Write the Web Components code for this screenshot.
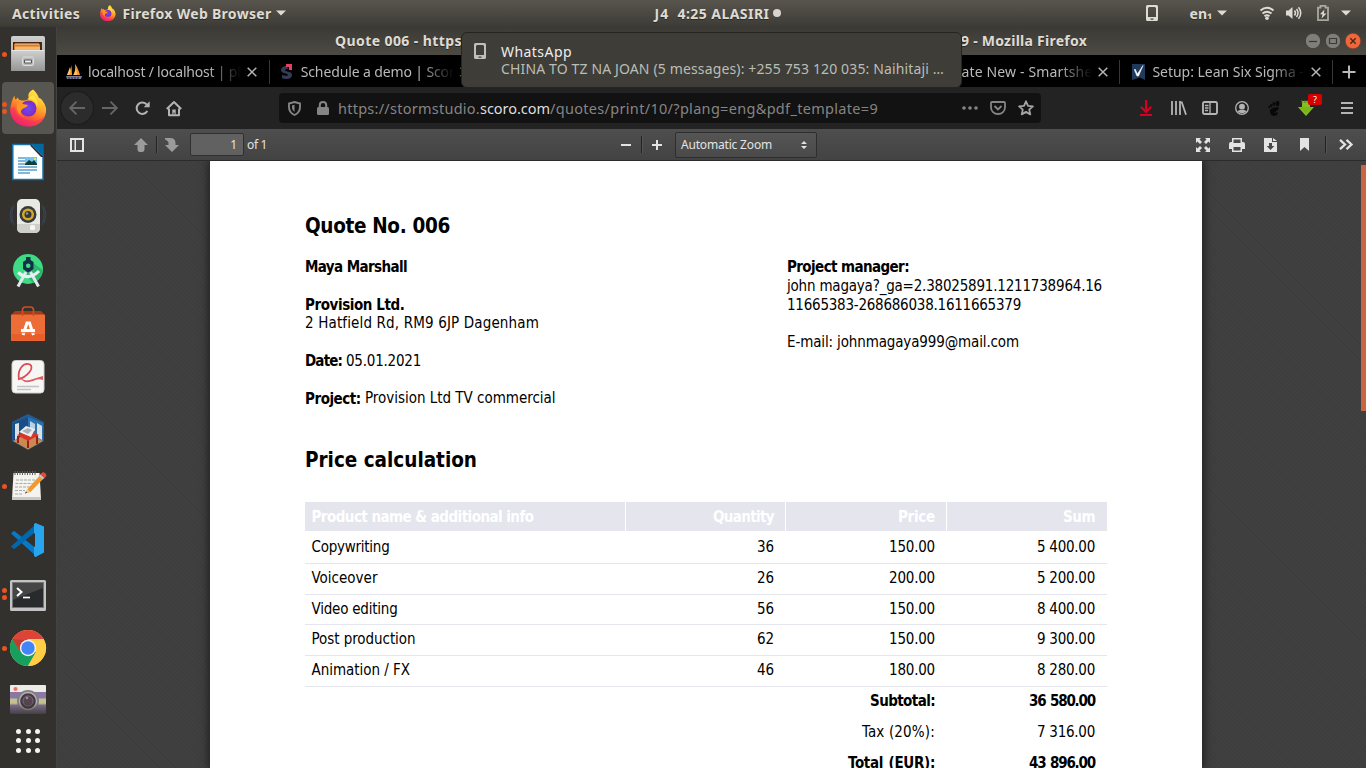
<!DOCTYPE html>
<html lang="en"><head><meta charset="utf-8"><title>Quote 006</title>
<style>html,body{margin:0;height:100%;overflow:hidden;background:#3d3d3d}</style></head><body>
<desktop-shell></desktop-shell>
<script>
const define=(name,html,init)=>customElements.define(name,class extends HTMLElement{
  constructor(){super();const t=document.createElement('template');t.innerHTML=html;this.attachShadow({mode:'open'}).append(t.content.cloneNode(true));}
  connectedCallback(){if(init)init.call(this);}
});

/* Icons share one dictionary; each entry is [width, height, markup]. */
const S='fill="none" stroke="currentColor"';
const ICONS={
caret:[10,10,'<path d="M0 2.5h10L5 7.5z" fill="currentColor"/>'],
phone:[12,16,'<path d="M1.5 0h9Q12 0 12 1.500v13q0 1.500-1.500 1.500h-9Q0 16 0 14.500v-13Q0 0 1.500 0zM2 3v9h8V3L9 2H3zM4.500 13.500v1.300h3v-1.300z" fill="currentColor" fill-rule="evenodd"/>'],
wifi:[16,14,`<g ${S} stroke-width="1.900"><path d="M1.500 4.500Q8-1 14.500 4.500"/><path d="M3.500 7.500q4.500-3.700 9 0"/><path d="M5.500 10.200q2.500-2 5 0"/></g><circle cx="8" cy="12.200" r="1.800" fill="currentColor"/>`],
volume:[16,14,`<path d="M0 4.500h2.500L6.500 1v12L2.500 9.500H0z" fill="currentColor"/><g ${S} stroke-width="1.500"><path d="M8.500 4.500q2 2.500 0 5"/><path d="M10.500 3q3 4 0 8"/><path d="M12.500 1.300q4.500 5.700 0 11.400"/></g>`],
battery:[12,16,`<path d="M3.500 2.700V.8h5v1.900H11v12.500H1V2.700z" ${S} stroke-width="1.800" opacity=".65"/><path d="M7.500 4.500 3 9.300h2.500L4.500 13.500 9.500 8.500H6.800z" fill="currentColor"/>`],
ff:[36,38,`<defs><linearGradient id="f" x1=".8" y1="0" x2=".3" y2="1"><stop stop-color="#fff44f"/><stop offset=".35" stop-color="#ffb52d"/><stop offset=".65" stop-color="#ff6a2b"/><stop offset="1" stop-color="#e5137c"/></linearGradient><radialGradient id="p"><stop stop-color="#6f4bf0"/><stop offset="1" stop-color="#7d2ac8"/></radialGradient></defs><path d="M23 .5C27 4 28 7 29 9c2 0 6 5 7 10C37 30 29 37.500 18 37.500S-.5 29 .4 19C1 14 3 8.500 4.500 6.500c0 2 .5 3 1 4L8 8.500c0 2 2 3 4 3 2 0 5 0 7-2C17 5 20 2 23 .5z" fill="url(#f)"/><path d="M0 20C0 31 8 37.500 18 37.500c8 0 15-4 17.500-12-3 5-9 7-15 6C10 31 5 26 5 18z" fill="#fb2865" opacity=".5"/><circle cx="18.500" cy="19.500" r="8" fill="url(#p)"/><path d="M7 15c2-2 4-2 6 0l5 1c-1 3-5 2-7 6-2 3 1 5 4 6-6-1-9-6-8-13z" fill="#ff9820"/><path d="M17 10c5-1 10 3 10 8 2-5-1-9-4-12z" fill="#ffe43f"/>`],
pma:[16,16,'<path d="M1 11C4 8 5 4 5.500 1L6 11zM7 11C10 7 9 4 9 0c3 4 4 8 5 11z" fill="#f79a26"/><path d="M4 3C5 6 4 9 3 11H1zM9.500 5q2 3 1.500 6H8z" fill="#ffc37a"/><path d="M0 12h16l-1 3H1z" fill="#767b98"/><path d="M3 15v-2m3 2v-2m3 2v-2m3 2v-2" stroke="#222" />'],
scoro:[12,15,'<path d="M6 2C2 2 0 4 0 6c0 4 7 3 7 5 0 1-3 1-6 0v3c4 2 10 1 10-3 0-4-7-3-7-5 0-1 2-1 3-1z" fill="#343b57"/><path d="M5 0h6v6H8V3H5z" fill="#e54064"/>'],
sheet:[13,16,'<path d="M0 0h13v16l-5-2.500L0 16z" fill="#203a5c"/><path d="M3 5l2.500 5L11 1.500 6.500 12H5L2.500 6z" fill="#fff" stroke="#fff" stroke-width=".6"/>'],
x:[10,10,`<path d="M.7.7l8.600 8.600M9.300.7.7 9.300" ${S} stroke-width="1.500"/>`],
plus:[14,14,`<path d="M7 .5v13M.5 7h13" ${S} stroke-width="2"/>`],
back:[16,14,`<path d="M16 7H1M7.500.7 1.200 7l6.300 6.300" ${S} stroke-width="1.900"/>`],
fwd:[16,14,`<path d="M0 7h15M8.500.7 14.800 7l-6.300 6.300" ${S} stroke-width="1.900"/>`],
reload:[15,14,`<path d="M11.800 3.600A5.700 5.700 0 1 0 12.300 10" ${S} stroke-width="2"/><path d="M14.700.3v6H8.700z" fill="currentColor"/>`],
home:[16,15,`<path d="M.8 8 8 1l7.200 7M3 7.500v6.700h10V7.500" ${S} stroke-width="2" stroke-linejoin="round"/><path d="M6.300 8.500h3.400v5h-1.200v-2h-1v2H6.300z" fill="currentColor"/>`],
shield:[13,15,`<path d="M6.500 1 12 2.500V6c0 4-2 6.500-5.500 8C3 12.500 1 10 1 6V2.500z" ${S} stroke-width="1.900"/><path d="M6.500 3.800V11C4.700 9.500 4 8 4 6V4.500z" fill="currentColor"/>`],
lock:[12,14,`<path d="M2.800 7V4q0-3 3.200-3t3.200 3v3" ${S} stroke-width="2"/><rect y="6" width="12" height="8" rx="1.500" fill="currentColor"/>`],
dots:[16,4,'<g fill="currentColor"><circle cx="2" cy="2" r="1.800"/><circle cx="8" cy="2" r="1.800"/><circle cx="14" cy="2" r="1.800"/></g>'],
pocket:[16,14,`<path d="M2 1h12q1 0 1 1v4.500c0 3.500-3 6.500-7 6.500S1 10 1 6.500V2q0-1 1-1z" ${S} stroke-width="1.800"/><path d="M4.500 5 8 8.500 11.500 5" ${S} stroke-width="1.900"/>`],
star:[16,16,`<path d="M8 1.300l2 4.500 4.900.5-3.700 3.300 1.100 4.800L8 11.900l-4.300 2.500 1.100-4.800L1.100 6.300 6 5.800z" ${S} stroke-width="1.800" stroke-linejoin="round"/>`],
down:[12,16,`<path d="M6 0v12M.8 6.800 6 12l5.200-5.200M0 15h12" ${S} stroke-width="2"/>`],
library:[16,14,`<path d="M1 0v14M5 0v14M9 0v14M10.500.5 15 13.700" ${S} stroke-width="1.800"/>`],
sidebar:[16,14,`<rect x="1" y="1" width="14" height="12" rx="1.500" ${S} stroke-width="1.900"/><path d="M8 1v12M3 4.500h3.500M3 7h3.500M3 9.500h3" ${S} stroke-width="1.300"/>`],
account:[14,14,`<circle cx="7" cy="7" r="6.300" ${S} stroke-width="1.300"/><circle cx="7" cy="5.700" r="2.900" fill="currentColor"/><path d="M2.600 10.500q1-1.700 2.500-1.500h4q1.500 0 2.400 1.500Q9.500 12.200 7 12.200t-4.400-1.700z" fill="currentColor"/>`],
foot:[12,15,'<g fill="#080808"><ellipse cx="9.500" cy="2.500" rx="2" ry="2.700"/><ellipse cx="5.800" cy="3" rx="1.300" ry="1.900"/><ellipse cx="3.300" cy="4.400" rx="1.100" ry="1.600"/><ellipse cx="1.300" cy="6" rx="1" ry="1.300"/><path d="M10.500 6.500C6 5.500 1.500 7.500 2 11c.5 3.500 4 4.500 6 3.500 2-1 2-3 1-3.500-1 0-1.500 1.500-2.500 1C5.500 11 11.500 9.500 10.500 6.500z"/></g>'],
green:[16,16,'<path d="M4 1v6H0l8 9 8-9h-4V1z" fill="#85be20"/><path d="M4 0v3M7 0v3M10 0v3" stroke="#4d7717"/><path d="M2 7h12l-6 7z" fill="#79b51b"/>'],
menu:[12,14,`<path d="M0 2h12M0 7h12M0 12h12" ${S} stroke-width="2"/>`],
pside:[14,14,'<path d="M0 0h14v14H0zM2 2v10h2.500V2zM6 2v10h6V2z" fill="#e4e4e4" fill-rule="evenodd"/>'],
up:[14,14,'<path d="M7 0l7 7h-3.500v4Q10.500 14 8 14H6q-2.500 0-2.500-3V7H0z" fill="currentColor"/>'],
dn:[14,14,'<path d="M0 0h5q5.500 0 5.500 5v2H14l-7 7-7-7h3.500V5Q3.500 3 0 1.500z" fill="currentColor"/>'],
minus:[10,2,'<path d="M0 0h10v2H0z" fill="currentColor"/>'],
pplus:[10,10,'<path d="M4 0h2v4h4v2H6v4H4V6H0V4h4z" fill="currentColor"/>'],
updown:[6,8,'<path d="M3 0l3 3H0zM3 8l3-3H0z" fill="currentColor"/>'],
full:[14,14,`<path d="M0 0h5L3.500 1.500 6 4 4 6 1.500 3.500 0 5zM14 0v5l-1.500-1.500L10 6 8 4l2.500-2.500L9 0zM0 14V9l1.500 1.500L4 8l2 2-2.500 2.500L5 14zM14 14H9l1.500-1.500L8 10l2-2 2.500 2.500L14 9z" fill="currentColor"/>`],
print:[16,14,'<path d="M3 0h10v4h1q2 0 2 2v5h-3v3H3v-3H0V6q0-2 2-2h1zM4.500 1.500V5h7V1.500zM4.500 9v3.500h7V9z" fill="currentColor" fill-rule="evenodd"/>'],
pdown:[13,14,'<path d="M0 0h8v4h5v10H0zM5 5v3H2.700l3.800 4 3.800-4H8V5z" fill="currentColor" fill-rule="evenodd"/><path d="M9 0l4 3H9z" fill="currentColor"/>'],
mark:[9,13,'<path d="M0 0h9v13L4.500 9 0 13z" fill="currentColor"/>'],
more:[14,11,`<path d="M1 .8l5 4.700-5 4.700M7.500.8l5 4.700-5 4.700" ${S} stroke-width="2.300"/>`],
wmin:[16,16,'<circle cx="8" cy="8" r="7.700" fill="#817e77" stroke="#34322e" stroke-width=".7"/><path d="M4 8.500h8" stroke="#3b3936" stroke-width="1.200"/>'],
wmax:[16,16,'<circle cx="8" cy="8" r="7.700" fill="#817e77" stroke="#34322e" stroke-width=".7"/><path d="M4.500 5.500h7v5h-7z" fill="none" stroke="#3b3936" stroke-width="1.200"/>'],
wclose:[16,16,'<circle cx="8" cy="8" r="7.700" fill="#ee683c" stroke="#7f341e" stroke-width=".5"/><path d="M5.300 5.300l5.400 5.400m0-5.400-5.400 5.400" stroke="#4d2416" stroke-width="1.400"/>'],
/* launcher artwork */
files:[36,36,'<defs><linearGradient id="g" x2="0" y2="1"><stop stop-color="#cfcfcf"/><stop offset="1" stop-color="#969696"/></linearGradient></defs><path d="M3 0h30q2 0 2 2v33H1V2q0-2 2-2z" fill="url(#g)"/><path d="M3 6h29v9H3z" fill="#4a2610"/><path d="M4 8h26v7H4z" fill="#d9792b"/><path d="M5 10.500h25v4H5z" fill="#f3b66b"/><path d="M5 8h24" stroke="#f7d4a4"/><path d="M1.500 14.500h33V35h-33z" fill="url(#g)"/><path d="M1.500 14.500h33" stroke="#e6e6e6"/><rect x="12.500" y="21" width="11" height="8.500" rx="1.500" fill="#b9b9b9" stroke="#ddd"/><path d="M14.500 24h7v3h-7z" fill="#eee" stroke="#555"/>'],
writer:[36,38,'<path d="M2.800 1.500h20L33 11.500v25H2.800z" fill="#fff" stroke="#1772a8" stroke-width="1.500"/><path d="M20.500.7h13.200V14z" fill="#0369a3"/><path d="M20.500.7 33.700 14H31L20.500 3z" fill="#1f3443"/><path d="M8 15h7m-7 3h7m-7 3h7m-7 3h19M8 27h19M8 30h12" stroke="#5aa0cd" stroke-width="1.600"/><path d="M15 14h12v8H15z" fill="#72c4ea"/><path d="M15 21l4-4 3 2 2-2 3 4v1H15z" fill="#143d36"/><circle cx="25" cy="16" r="1" fill="#ffe85c"/>'],
speaker:[36,36,'<g fill="none" stroke="#394350"><path d="M4 7q-4 10 0 20M2 9q-3.500 8 0 16M32 7q4 10 0 20M34 9q3.500 8 0 16" stroke-width="1.200"/></g><rect x="7" y="1" width="23" height="34" rx="5" fill="#e8e8e5"/><path d="M7 26v4q0 5 5 5h13q5 0 5-5v-4z" fill="#cfcfca"/><circle cx="18" cy="16.500" r="8.500" fill="#353a40"/><circle cx="18" cy="16.500" r="6" fill="#d3a928"/><circle cx="18" cy="16.500" r="3.500" fill="#33363a"/><circle cx="17" cy="15.500" r="1.200" fill="#92999f"/><rect x="20" y="27" width="5" height="5" rx="1.500" fill="#f6f6f6"/>'],
studio:[36,36,'<circle cx="18" cy="17" r="15" fill="#3ddc84"/><path d="M22 10l10.500 8A15 15 0 0 1 23 31L14 21z" fill="#2eb46b"/><path d="M16 20 8 34.500M20.500 20l8 14.500" stroke="#dfe8ee" stroke-width="3"/><path d="M8 20.500q10.500 9 21-1.500" fill="none" stroke="#e8eff5" stroke-width="3"/><path d="M16 5h4.500v3l3 2v7l-5.300 3.500L13 17v-7l3-2z" fill="#123046"/><circle cx="18.200" cy="13.700" r="2.300" fill="#3ddc84"/>'],
bag:[36,36,'<path d="M1 9l4-4h26l4 4z" fill="#a33c18"/><rect x="1" y="8.500" width="34" height="26.500" rx="1" fill="#ec6d37"/><path d="M1.500 28h33v6.500h-33z" fill="#e75e2b"/><path d="M12.500 10V4q0-3 3-3h5q3 0 3 3v6" fill="none" stroke="#cf4f21" stroke-width="1.700"/><path d="M13 29l4-12h2.500l4 12" fill="none" stroke="#fff" stroke-width="3"/><path d="M11 24.500h14" stroke="#fff" stroke-width="3"/><path d="M11 26.700h14" stroke="#eb7142" stroke-width="1"/>'],
pdf:[36,36,'<rect x="2" y=".5" width="32" height="32.500" rx="3.500" fill="#f6f6f5" stroke="#cfcfcf"/><path d="M8 19.500C17 17 25 8 20 4.500 13 2 7 10 9 20" fill="none" stroke="#dc4a50" stroke-width="1.700"/><path d="M9 15q3 7 11 5 6-2 13-4v4q-5-2-10 1Q12 25 9 15z" fill="#e05a5e"/><path d="M7 26.500h22M7 29.500h14" stroke="#c3c3c3" stroke-width="1.300"/>'],
house:[36,36,'<path d="M18 0l16 8v19L18 36 2 27V8z" fill="#1f5c97"/><path d="M18 3v18L3 27V9z" fill="#1a4d86"/><path d="M18 3v18l15 6V9z" fill="#2d72b0"/><path d="M18 19l15 8-15 8.500L3 27z" fill="#c88a50"/><path d="M5 10l4-1v14l-4 3zM27 9l5 3v14l-5-3z" fill="#d8e2e4"/><path d="M20 7l5 3v7l-5-2z" fill="#b8d2e3"/><path d="M8 22v7m19-7v8M18 26v8" stroke="#9c1d1b" stroke-width="2"/><path d="M7 21l12-5 10 5-11 6z" fill="#db352b"/><path d="M9 18l7-6 9 3-4 8z" fill="#ececec"/><path d="M12 17l6-3 4 2-4 4z" fill="#a9b4ba"/>'],
notes:[36,36,'<path d="M3.500 5h26L31 31H2z" fill="#f3f3f0"/><path d="M2 29h29v3H2z" fill="#c9c9c4"/><path d="M5 3v4m2.500-4v4M10 3v4m2.500-4v4M15 3v4m2.500-4v4M20 3v4m2.500-4v4M25 3v4" stroke="#5e5e5a"/><path d="M6 12h19M5.500 15.500h17M5 19h15M5 22.500h10M5 26h8" stroke="#aaa" stroke-width="1.200" stroke-dasharray="3 1"/><path d="M15 25.500l3-5L32 5l3.500 3.500L20.500 24z" fill="#f29a2e"/><path d="M30 7l4 3.500 2.500-2.500q0-3-3.500-4z" fill="#e2483e"/><path d="M29 8l3.700 3.500 1.500-1.500L30.500 6.500z" fill="#bcc5ca"/><path d="M15 25.500l2.500-4.500 2.500 2.800z" fill="#e9cfa3"/><path d="M15 25.500l1-2 1 1z" fill="#222"/>'],
code:[36,36,'<path d="M1 11.500l3-2.800L27 27v8z" fill="#0879c5"/><path d="M1 24.500l3 2.800L27 9V1z" fill="#0068af"/><path d="M25.500 1 34 4.500v26L25.500 35l-1.500-1V2z" fill="#29a5ee"/><path d="M25 11v14l-9-7z" fill="#33312d"/>'],
term:[36,36,'<rect x="0" y="4" width="36" height="31" rx="1.500" fill="#c3c3c5"/><rect x="2.500" y="6.500" width="31" height="25" fill="#292a2b" stroke="#777"/><path d="M3 7h30v5L3 24z" fill="#454545"/><path d="M7 12l4.500 4L7 20" fill="none" stroke="#fff" stroke-width="2"/><path d="M13 21.500h7" stroke="#fff" stroke-width="1.700"/>'],
chrome:[36,36,'<circle cx="18" cy="18" r="18" fill="#ffce44"/><path d="M18 18 2.400 9A18 18 0 0 0 18 36l8-14z" fill="#17a05d"/><path d="M2.400 9A18 18 0 0 1 33.600 9H18l-8 13z" fill="#db4437"/><path d="M2.400 9 11 22l7-4-4-8z" fill="#c33b30"/><path d="M18 9h15.600A18 18 0 0 1 18 36l8-14z" fill="#ffce44"/><circle cx="18" cy="18" r="8.200" fill="#f1f1f1"/><circle cx="18" cy="18" r="6.700" fill="#4285f4"/>'],
camera:[36,36,'<defs><linearGradient id="c" x2="0" y2="1"><stop offset=".6" stop-color="#33302c" stop-opacity="0"/><stop offset="1" stop-color="#33302c" stop-opacity=".8"/></linearGradient></defs><rect y="1" width="36" height="29" rx="1.500" fill="#8a78a2"/><path d="M0 2q0-1 1-1h34q1 0 1 1v6H0z" fill="#ecebe5"/><path d="M0 14.500h36v6H0z" fill="#c4c191"/><circle cx="18" cy="17" r="11" fill="#837f86"/><circle cx="18" cy="17" r="8.500" fill="#443c45" stroke="#bbb5b7" stroke-width="1.300"/><circle cx="18" cy="17" r="5" fill="#564451" stroke="#7c697a"/><circle cx="17" cy="14" r="1.300" fill="#9c8b9d"/><circle cx="5.500" cy="5" r="2" fill="#f36d68"/><path d="M0 1h36v29H0z" fill="url(#c)"/>']
};
customElements.define('ui-icon',class extends HTMLElement{
  constructor(){super();this.attachShadow({mode:'open'});}
  connectedCallback(){
    const [w,h,m]=ICONS[this.getAttribute('name')],k=+this.getAttribute('scale')||1;
    this.shadowRoot.innerHTML=`<style>:host{display:block;flex:none;width:${w*k}px;height:${h*k}px}svg{display:block;overflow:visible}</style><svg width="${w*k}" height="${h*k}" viewBox="0 0 ${w} ${h}">${m}</svg>`;
  }
});
/* Text tracked so that it fills the width given in w. */
define('fit-text','<style>:host{display:inline-block;flex:none;white-space:pre}span{display:inline-block}</style><span><slot></slot></span>',function(){
  const s=this.shadowRoot.querySelector('span'),w=+this.getAttribute('w');
  if(w){const n=this.textContent.length;s.style.letterSpacing=((w-s.getBoundingClientRect().width)/n)+'px';this.style.width=w+'px';}
});

define('top-bar',`<style>:host{display:flex;align-items:center;height:27px;box-sizing:border-box;background:linear-gradient(#58554d,#3d3c37);color:#dfdbd2;font:bold 14px/27px "Noto Sans",sans-serif;text-shadow:0 1px #2a2926;border-bottom:1px solid #3b3a36}.sub{display:inline-block;transform:translateY(-2.500px)}</style>
<fit-text w="68" style="margin-left:12px">Activities</fit-text><ui-icon name="ff" scale=".43" style="margin-left:20px"></ui-icon><fit-text w="149" style="margin-left:7px">Firefox Web Browser</fit-text><ui-icon name="caret" style="margin-left:5px"></ui-icon>
<fit-text w="15" style="margin-left:368px">J4</fit-text><fit-text w="92" style="margin-left:8px">4:25 ALASIRI</fit-text><span style="width:8px;height:8px;border-radius:4px;background:#d7d4cd;margin-left:4px"></span>
<ui-icon name="phone" style="margin-left:365px"></ui-icon><fit-text w="23" style="margin-left:31px">en<span class="sub">₁</span></fit-text><ui-icon name="caret" style="margin-left:5px"></ui-icon><ui-icon name="wifi" style="margin-left:32px"></ui-icon><ui-icon name="volume" style="margin-left:11px"></ui-icon><ui-icon name="battery" style="margin-left:15px"></ui-icon><ui-icon name="caret" style="margin-left:12px"></ui-icon>`);

define('dock-item',`<style>:host{display:flex;align-items:center;width:52px;height:52px;margin:1px 3px 1px 2px;border-radius:4px}:host([active]){background:#585651}
.d{width:8px;display:grid;gap:2px}.d i{width:5px;height:5px;border-radius:50%;background:#e95420}</style><div class="d"></div><slot></slot>`,function(){
  this.shadowRoot.querySelector('.d').innerHTML='<i></i>'.repeat(+this.getAttribute('dots')||0);});
define('app-dock',`<style>:host{display:flex;flex-direction:column;width:57px;height:741px;box-sizing:border-box;background:#33312d;border-right:1px solid #45433f}
.g{display:grid;grid-template-columns:repeat(3,5px);gap:4.500px;margin:-.5px 0 0 16px}.g i{width:5px;height:5px;border-radius:50%;background:#f4f4f2}</style>
<dock-item dots="1"><ui-icon name="files"></ui-icon></dock-item><dock-item dots="2" active><ui-icon name="ff"></ui-icon></dock-item><dock-item><ui-icon name="writer"></ui-icon></dock-item><dock-item><ui-icon name="speaker"></ui-icon></dock-item><dock-item><ui-icon name="studio"></ui-icon></dock-item><dock-item><ui-icon name="bag"></ui-icon></dock-item><dock-item><ui-icon name="pdf"></ui-icon></dock-item><dock-item><ui-icon name="house"></ui-icon></dock-item><dock-item dots="1"><ui-icon name="notes"></ui-icon></dock-item><dock-item><ui-icon name="code"></ui-icon></dock-item><dock-item dots="2"><ui-icon name="term"></ui-icon></dock-item><dock-item dots="1"><ui-icon name="chrome"></ui-icon></dock-item><dock-item><ui-icon name="camera"></ui-icon></dock-item>
<div class="g"><i></i><i></i><i></i><i></i><i></i><i></i><i></i><i></i><i></i></div>`);

define('title-bar',`<style>:host{display:flex;align-items:center;height:28px;background:linear-gradient(#3b3a36,#4d4a44);color:#dfdbd2;font:bold 14px/28px "Noto Sans",sans-serif;text-shadow:0 1px #2a2926}</style>
<fit-text w="127" style="margin-left:278px">Quote 006 - https</fit-text><fit-text w="126" style="margin-left:499px">9 - Mozilla Firefox</fit-text>
<ui-icon name="wmin" style="margin-left:218px"></ui-icon><ui-icon name="wmax" style="margin-left:4px"></ui-icon><ui-icon name="wclose" style="margin-left:4px"></ui-icon>`);

define('browser-tab',`<style>:host{display:flex;align-items:center;width:212.700px;flex:none;box-sizing:border-box;height:24px;border-right:1px solid #363636;padding-left:9px}
.i{width:22px;display:flex}.t{width:154px;height:24px;line-height:23px;overflow:hidden;-webkit-mask-image:linear-gradient(90deg,#000 120px,transparent 153px)}ui-icon{color:#b5b5b5;margin-left:5px}</style><div class="i"><slot name="icon"></slot></div><div class="t"><slot></slot></div><ui-icon name="x"></ui-icon>`);
define('tab-strip',`<style>:host{display:flex;align-items:center;height:32px;padding-top:1px;box-sizing:border-box;background:#000;color:#b9b9b9;font:14px "Noto Sans",sans-serif}</style>
<browser-tab><ui-icon slot="icon" name="pma"></ui-icon><fit-text w="166">localhost / localhost | php</fit-text></browser-tab>
<browser-tab><ui-icon slot="icon" name="scoro" style="margin-left:2px"></ui-icon><fit-text w="162">Schedule a demo | Scoro</fit-text></browser-tab>
<browser-tab></browser-tab><browser-tab></browser-tab><browser-tab><fit-text w="167">Create New - Smartsheet</fit-text></browser-tab>
<browser-tab style="padding-left:10px"><ui-icon slot="icon" name="sheet" style="margin-left:2px"></ui-icon><fit-text w="155">Setup: Lean Six Sigma - </fit-text></browser-tab>
<ui-icon name="plus" style="margin-left:9px"></ui-icon>`);

define('nav-bar',`<style>:host{display:flex;align-items:center;height:42px;background:#232323;color:#b4b4b4;font:14.500px/30px "Noto Sans",sans-serif}
.b{width:32px;height:32px;border-radius:50%;background:#2c2c2c;box-shadow:0 0 0 1px #1b1b1b;display:grid;place-items:center;margin-left:4px;color:#656565}
.u{display:flex;align-items:center;width:762px;height:30px;border-radius:4px;background:#121212;margin-left:97px;color:#858585}b{font-weight:400;color:#dedede}
.g{position:relative}.badge{position:absolute;left:10px;top:-6px;width:14px;height:11px;border-radius:2px;background:#d90000;color:#fff;font:9px/11px "Noto Sans",sans-serif;text-align:center}</style>
<div class="b"><ui-icon name="back"></ui-icon></div><ui-icon name="fwd" style="margin-left:9px;color:#656565"></ui-icon><ui-icon name="reload" style="margin-left:17px"></ui-icon><ui-icon name="home" style="margin-left:16px"></ui-icon>
<div class="u"><ui-icon name="shield" style="margin-left:9px"></ui-icon><ui-icon name="lock" style="margin-left:16px"></ui-icon><fit-text w="142" style="margin-left:9px">https://stormstudio.</fit-text><b><fit-text w="70">scoro.com</fit-text></b><fit-text w="328">/quotes/print/10/?plang=eng&amp;pdf_template=9</fit-text><ui-icon name="dots" style="margin-left:84px"></ui-icon><ui-icon name="pocket" style="margin-left:12px"></ui-icon><ui-icon name="star" style="margin-left:12px;color:#a5a5a5"></ui-icon></div>
<ui-icon name="down" style="margin-left:99px;color:#d70022"></ui-icon><ui-icon name="library" style="margin-left:19px"></ui-icon><ui-icon name="sidebar" style="margin-left:15px"></ui-icon><ui-icon name="account" style="margin-left:17px"></ui-icon><ui-icon name="foot" style="margin-left:19px"></ui-icon><div class="g" style="margin-left:18px"><ui-icon name="green"></ui-icon><div class="badge">?</div></div><ui-icon name="menu" style="margin-left:27px"></ui-icon>`);

define('pdf-toolbar',`<style>:host{display:flex;align-items:center;height:32px;box-sizing:border-box;background:linear-gradient(#4e4e4e,#434343);border-bottom:1px solid #2b2b2b;color:#e3e3e3;font:12px "Noto Sans",sans-serif}
.s{width:1px;height:17px;background:#222;box-shadow:1px 0 #555}.p{width:54px;height:23px;box-sizing:border-box;border:1px solid #303030;border-radius:2px;background:#616161;text-align:right;padding-right:6px;line-height:21px;margin-left:11px}
.z{display:flex;align-items:center;width:142px;height:26px;box-sizing:border-box;border:1px solid #2e2e2e;border-radius:2px;background:linear-gradient(#555,#494949);margin-left:13px}</style>
<ui-icon name="pside" style="margin-left:13px"></ui-icon><ui-icon name="up" style="margin-left:50px;color:#9b9b9b"></ui-icon><div class="s" style="margin-left:8px"></div><ui-icon name="dn" style="margin-left:8px;color:#9b9b9b"></ui-icon><div class="p">1</div><fit-text w="20" style="margin-left:3px">of 1</fit-text>
<ui-icon name="minus" style="margin-left:354px"></ui-icon><div class="s" style="margin-left:10px"></div><ui-icon name="pplus" style="margin-left:10px"></ui-icon><div class="z"><fit-text w="91" style="margin-left:5px">Automatic Zoom</fit-text><ui-icon name="updown" style="margin-left:29px"></ui-icon></div>
<ui-icon name="full" style="margin-left:379px"></ui-icon><ui-icon name="print" style="margin-left:19px"></ui-icon><ui-icon name="pdown" style="margin-left:19px"></ui-icon><ui-icon name="mark" style="margin-left:23px"></ui-icon><div class="s" style="margin-left:16px"></div><ui-icon name="more" style="margin-left:13px"></ui-icon>`);

const num=(w,t)=>`<fit-text w="${w}">${t}</fit-text>`;
const rows=[['Copywriting',78,36,'150.00','5 400.00'],['Voiceover',66,26,'200.00','5 200.00'],['Video editing',86,56,'150.00','8 400.00'],['Post production',104,62,'150.00','9 300.00'],['Animation / FX',98.5,46,'180.00','8 280.00']];
define('price-table',`<style>:host{display:block;width:802px}.r{display:grid;grid-template-columns:321px 160px 161px 160px;height:30.800px;line-height:28.400px;box-sizing:border-box;border-bottom:1.400px solid #e5e5ee}
.r>*{text-align:right;padding-right:12px}.r>:first-child{text-align:left;padding:0 0 0 6.500px}.h{height:30px;line-height:30px;border:0;color:#fff;font-weight:700}.h>*{background:#e5e5ee;border-right:1px solid #fff;padding-right:11px;height:29.500px}.h>:last-child{border:0;padding-right:12px}.n{border-color:transparent}.k{font-weight:700;word-spacing:1px}</style>
<div class="r h"><div>${num(222,'Product name &amp; additional info')}</div><div>${num(61,'Quantity')}</div><div>${num(37,'Price')}</div><div>${num(32,'Sum')}</div></div>
<div style="height:1px"></div>${rows.map(r=>`<div class="r"><div>${num(r[1],r[0])}</div><div>${num(17,r[2])}</div><div>${num(46,r[3])}</div><div>${num(58,r[4])}</div></div>`).join('')}
<div class="r n k"><div></div><div></div><div>${num(65,'Subtotal:')}</div><div>${num(66,'36 580.00')}</div></div>
<div class="r n"><div></div><div></div><div>${num(73,'Tax (20%):')}</div><div>${num(58,'7 316.00')}</div></div>
<div class="r n k"><div></div><div></div><div>${num(87,'Total (EUR):')}</div><div>${num(66,'43 896.00')}</div></div>`);

define('quote-page',`<style>:host{display:block;width:992px;height:607px;box-sizing:border-box;overflow:hidden;padding:52px 95px 0;background:#fff;color:#000;font:15px/18.750px "DejaVu Sans Condensed","DejaVu Sans",sans-serif;font-stretch:condensed}
h1,h2{font-size:20.500px;line-height:26px;margin:0}.c{display:grid;grid-template-columns:482px 1fr;margin-top:19.300px;height:149.700px}.c div{height:18.750px}.up{transform:translateY(-1px)}h2{margin-top:39px}price-table{margin-top:29px}</style>
<h1><fit-text w="145">Quote No. 006</fit-text></h1>
<section class="c"><div><div><b><fit-text w="102">Maya Marshall</fit-text></b></div><div></div><div><b><fit-text w="99.500">Provision Ltd.</fit-text></b></div><div class="up"><fit-text w="234">2 Hatfield Rd, RM9 6JP Dagenham</fit-text></div><div></div><div><b><fit-text w="41">Date: </fit-text></b><fit-text w="75">05.01.2021</fit-text></div><div></div><div><b><fit-text w="60">Project: </fit-text></b><fit-text class="up" w="190.500">Provision Ltd TV commercial</fit-text></div></div>
<div><div><b><fit-text w="122">Project manager:</fit-text></b></div><div><fit-text w="315">john magaya?_ga=2.38025891.1211738964.16</fit-text></div><div><fit-text w="234">11665383-268686038.1611665379</fit-text></div><div></div><div><fit-text w="232">E-mail: johnmagaya999@mail.com</fit-text></div></div></section>
<h2><fit-text w="172">Price calculation</fit-text></h2><price-table></price-table>`);

define('pdf-viewer',`<style>:host{display:flex;justify-content:space-between;height:607px;padding-left:153px;overflow:hidden;background:repeating-linear-gradient(45deg,#3d3d3d 0 1px,#404040 1px 3px)}quote-page{box-shadow:0 0 9px 1px #1c1c1c}.s{width:5px;height:246px;margin-top:4px;background:#cb6541}</style><quote-page></quote-page><div class="s"></div>`);

define('toast-note',`<style>:host{display:flex;width:501px;height:56px;box-sizing:border-box;border:1px solid #25241f;border-radius:6px;background:#3f3d38;padding:10px 0 0 12px;color:#eeeeec;font:14px/17px "Noto Sans",sans-serif}ui-icon{color:#c2bfb8}.t{margin-left:15px}.m{color:#babdb6}</style><ui-icon name="phone"></ui-icon><div class="t"><div><fit-text w="71">WhatsApp</fit-text></div><div class="m"><fit-text w="443">CHINA TO TZ NA JOAN (5 messages): +255 753 120 035: Naihitaji …</fit-text></div></div>`);

define('desktop-shell',`<style>:host{display:block;width:1366px;height:768px;position:relative;overflow:hidden}.m{display:flex}.w{width:1309px}toast-note{position:absolute;left:461px;top:32px}</style>
<top-bar></top-bar><div class="m"><app-dock></app-dock><div class="w"><title-bar></title-bar><tab-strip></tab-strip><nav-bar></nav-bar><pdf-toolbar></pdf-toolbar><pdf-viewer></pdf-viewer></div></div><toast-note></toast-note>`);
</script></body></html>
